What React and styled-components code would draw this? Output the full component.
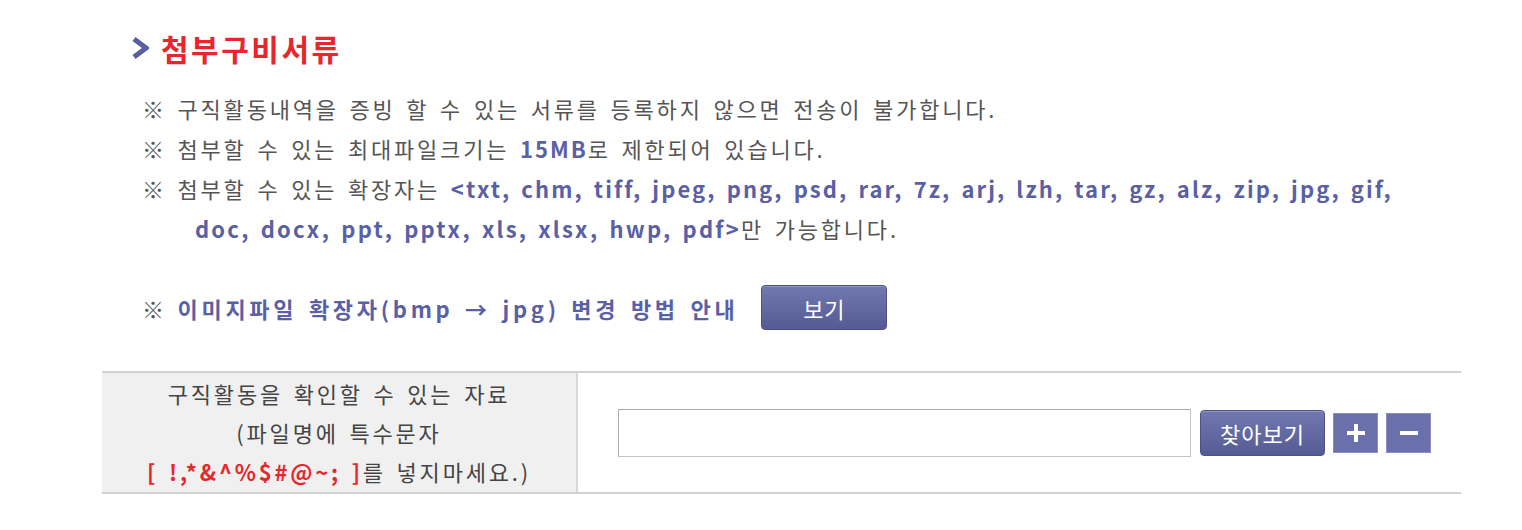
import React from 'react';
import styled, { createGlobalStyle } from 'styled-components';

const GlobalStyle = createGlobalStyle`
  body {
    margin: 0;
    background: #fff;
    font-family: "Noto Sans CJK KR", "Noto Sans", sans-serif;
  }
`;

const Section = styled.section`
  width: 1359px;
  padding: 28px 0 0 102px;
  font-size: 22px;
  letter-spacing: 2.8px;
  word-spacing: 3px;
`;

const Title = styled.h2`
  display: flex;
  align-items: center;
  gap: 12px;
  margin: 0;
  padding-left: 30px;
  height: 40px;
  font-size: 30px;
  font-weight: 700;
  color: #e8262b;
  letter-spacing: 2.5px;
`;

const NoteList = styled.ul`
  list-style: none;
  margin: 20px 0 0;
  padding: 0 0 0 40px;
`;

const Note = styled.li`
  line-height: 40px;
  color: #555;
  white-space: nowrap;
  padding-left: ${(p) => (p.$hanging ? '53px' : '0')};
  text-indent: ${(p) => (p.$hanging ? '-53px' : '0')};
`;

const Blue = styled.b`
  color: #5a5fa6;
  font-weight: 700;
  letter-spacing: ${(p) => p.$spacing || '2px'};
`;

const GuideRow = styled.div`
  display: flex;
  align-items: center;
  gap: 23px;
  margin: 37px 0 0 40px;
  color: #555;
`;

const PurpleButton = styled.button`
  width: ${(p) => p.$w}px;
  height: ${(p) => p.$h}px;
  border: 1px solid #4c5288;
  border-radius: 4px;
  background: linear-gradient(#7278b0, #545b94);
  color: #fff;
  font-family: inherit;
  font-size: 22px;
  letter-spacing: 1px;
  padding: 0;
  cursor: pointer;
  box-shadow: inset 0 1px 0 rgba(255, 255, 255, 0.25);
`;

const Table = styled.div`
  display: grid;
  grid-template-columns: 476px 1fr;
  margin-top: 41px;
  border-top: 2px solid #d2d2d2;
  border-bottom: 2px solid #d2d2d2;
`;

const HeadCell = styled.div`
  background: #f0f0f0;
  border-right: 2px solid #d8d8d8;
  text-align: center;
  line-height: 39px;
  padding: 1px 0;
  color: #444;
`;

const Red = styled.b`
  color: #e8262b;
  letter-spacing: 2.8px;
`;

const BodyCell = styled.div`
  display: flex;
  align-items: center;
  padding-left: 40px;
`;

const FileInput = styled.input`
  box-sizing: border-box;
  width: 573px;
  height: 48px;
  border: 1px solid #c4c4c4;
  border-top-color: #a9a9a9;
  border-left-color: #b0b0b0;
  margin-right: 9px;
`;

const SquareButton = styled.button`
  width: 45px;
  height: 40px;
  margin-left: 8px;
  padding: 0;
  border: 1px solid #8a8fc4;
  background: #6970ac;
  display: flex;
  align-items: center;
  justify-content: center;
  cursor: pointer;
`;

const Chevron = () => (
  <svg width="17" height="22" viewBox="0 0 17 22">
    <path d="M2 2 L14 11 L2 20" fill="none" stroke="#5a5fa0" strokeWidth="5" strokeLinejoin="miter" />
  </svg>
);

const Plus = () => (
  <svg width="20" height="20" viewBox="0 0 20 20">
    <rect x="8" y="1" width="4" height="18" fill="#fff" />
    <rect x="1" y="8" width="18" height="4" fill="#fff" />
  </svg>
);

const Minus = () => (
  <svg width="20" height="20" viewBox="0 0 20 20">
    <rect x="1" y="8" width="18" height="4" fill="#fff" />
  </svg>
);

export default function App() {
  return (
    <>
      <GlobalStyle />
      <Section>
        <Title>
          <Chevron />
          첨부구비서류
        </Title>
        <NoteList>
          <Note>※ 구직활동내역을 증빙 할 수 있는 서류를 등록하지 않으면 전송이 불가합니다.</Note>
          <Note>
            ※ 첨부할 수 있는 최대파일크기는 <Blue>15MB</Blue>로 제한되어 있습니다.
          </Note>
          <Note $hanging>
            ※ 첨부할 수 있는 확장자는{' '}
            <Blue $spacing="2.1px">
              &lt;txt, chm, tiff, jpeg, png, psd, rar, 7z, arj, lzh, tar, gz, alz, zip, jpg, gif,
            </Blue>
            <br />
            <Blue $spacing="2.2px">doc, docx, ppt, pptx, xls, xlsx, hwp, pdf&gt;</Blue>만 가능합니다.
          </Note>
        </NoteList>
        <GuideRow>
          <span>
            ※ <Blue $spacing="3.7px">이미지파일 확장자(bmp → jpg) 변경 방법 안내</Blue>
          </span>
          <PurpleButton $w={126} $h={45}>보기</PurpleButton>
        </GuideRow>
        <Table>
          <HeadCell>
            구직활동을 확인할 수 있는 자료
            <br />
            (파일명에 특수문자
            <br />
            <Red>[ !,*&amp;^%$#@~; ]</Red>를 넣지마세요.)
          </HeadCell>
          <BodyCell>
            <FileInput type="text" />
            <PurpleButton $w={125} $h={46}>찾아보기</PurpleButton>
            <SquareButton aria-label="추가">
              <Plus />
            </SquareButton>
            <SquareButton aria-label="삭제">
              <Minus />
            </SquareButton>
          </BodyCell>
        </Table>
      </Section>
    </>
  );
}
